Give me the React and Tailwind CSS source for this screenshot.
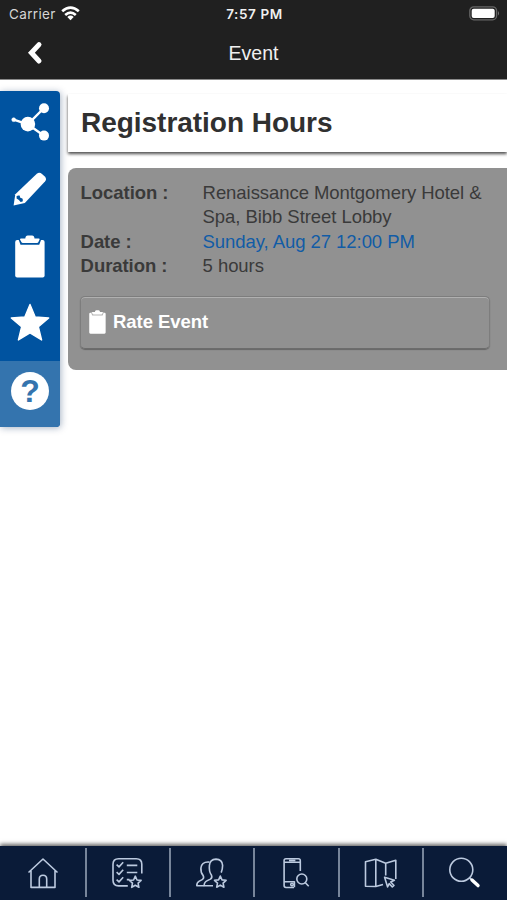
const ShareIcon = () => (
    <svg viewBox="0 91 60 67" className="w-[60px] h-[67px]" fill="#fff" stroke="#fff">
        <path d="M13.7 119.7 27.8 124.3 44 108M27.8 124.3 44 135.7" fill="none" strokeWidth="2.4" />
        <circle cx="13.7" cy="119.7" r="1.9" strokeWidth="0.6" />
        <circle cx="27.9" cy="124.1" r="7.3" stroke="none" />
        <circle cx="44" cy="108.2" r="5" stroke="none" />
        <circle cx="44" cy="135.6" r="5" stroke="none" />
    </svg>
)

const PencilIcon = () => (
    <svg viewBox="0 158 60 67" className="w-[60px] h-[67px]">
        <path d="M15.3 194.2 36.8 173.8Q39.3 171.6 42 173.9L44.8 176.4Q47.2 178.9 45 181.4L24.8 203 13.6 205.6Z" fill="#fff" />
        <path d="M16.6 196Q18.2 195 19.6 195.6L20.3 197.7 22.4 198.6Q23.3 200.2 22.6 201.4L20.6 202Q19.2 199.8 16.6 198.6Z" fill="#0053a0" />
    </svg>
)

const ClipboardIcon = ({ className, line }) => (
    <svg viewBox="0 0 30 43" className={className}>
        <rect x="0.2" y="5" width="29.4" height="37.5" rx="2" fill="#fff" />
        <path d="M3.2 3.5 5.5 9.8H24.2L26.6 3.5Z" fill={line} />
        <path d="M5 4.6Q5 3.6 6 3.6H10.3Q10.5 0.4 12.8 0.4H17Q19.3 0.4 19.5 3.6H23.8Q24.8 3.6 24.6 4.6L23.3 7.2Q23 7.9 22 7.9H7.8Q6.9 7.9 6.5 7.2Z" fill="#fff" />
    </svg>
)

const StarIcon = () => (
    <svg viewBox="0 292 60 69" className="w-[60px] h-[69px]">
        <path
            d="M30 304.4 35.2 317 48.7 318 38.4 326.8 41.6 340 30 332.9 18.4 340 21.6 326.8 11.3 318 24.8 317Z"
            fill="#fff"
            stroke="#fff"
            strokeWidth="1.4"
            strokeLinejoin="round"
        />
    </svg>
)

const WifiIcon = () => (
    <svg viewBox="0 0 19 15" className="w-[19px] h-[15px] -mt-px" fill="none" stroke="#fff" strokeWidth="2.7">
        <path d="M1.2 5.2Q9.5 -2 17.8 5.2" />
        <path d="M4.2 8.9Q9.5 4.3 14.8 8.9" />
        <path d="M6.3 10.9Q9.5 8.3 12.7 10.9L9.5 14.2Z" fill="#fff" stroke="none" />
    </svg>
)

const smallStar = 'M0 -5.8 1.7 -2 5.8 -1.6 2.8 1.2 3.6 5.3 0 3.2 -3.6 5.3 -2.8 1.2 -5.8 -1.6 -1.7 -2Z'

// 하단 메뉴 아이콘
const tabs = [
    {
        name: 'home',
        box: '0 846 85 54',
        width: 'w-[87px]',
        art: <path d="M28.5 872.5 43 859 57.5 872.5M31 870.8V887.4H55V870.8M39.3 887.2V879Q39.3 875.2 43 875.2T46.7 879V887.2" />,
    },
    {
        name: 'agenda',
        box: '87 846 82 54',
        width: 'w-[84px]',
        art: (
            <>
                <path d="M127.8 885.9H118.6Q113 885.9 113 880.3V864.3Q113 858.8 118.6 858.8H136.3Q141.8 858.8 141.8 864.3V873.5" />
                <path d="M116.6 864.7 119 866.9 123.2 862.3M116.6 872.2 119 874.4 123.2 869.8M116.6 879.7 119 881.9 123.2 877.3M126.8 865.4H137.3M126.8 872.5H137.3M126.8 879.6H129.5" />
                <path d={smallStar} transform="translate(135.3 882)" />
            </>
        ),
    },
    {
        name: 'attendees',
        box: '171 846 82 54',
        width: 'w-[84px]',
        art: (
            <>
                <path d="M213 885.7H204.2Q203.9 882.3 207.3 880.6L210.4 879.1Q212.6 877.8 211.4 875 208.8 871.8 209.4 865.4 209.8 859.3 216 859.1 222.3 859.3 222.6 865.4 222.6 869 221.2 872.6" />
                <path d="M209.4 862.1Q201.8 861.4 200.9 868 200.6 872.8 203.2 875.6 204.4 878.4 202.2 879.6L199.3 881.1Q196.6 882.6 196.8 885.7H204.2" />
                <path d={smallStar} transform="translate(220.3 881.9)" />
            </>
        ),
    },
    {
        name: 'app search',
        box: '255 846 83 54',
        width: 'w-[85px]',
        art: (
            <>
                <path d="M294 887.5H286Q284.1 887.5 284.1 885.6V860.6Q284.1 858.7 286 858.7H298.4Q300.3 858.7 300.3 860.6V871M284.1 862.2H300.3M284.1 881.7H294.4V887.3M289 860.5H295.4" />
                <circle cx="292" cy="884.6" r="1.3" />
                <circle cx="301.8" cy="879" r="5" />
                <path d="M305.4 882.7 308.7 886.2" />
            </>
        ),
    },
    {
        name: 'map',
        box: '340 846 82 54',
        width: 'w-[84px]',
        art: (
            <>
                <path d="M383 884.5 375.8 886.5 365.5 886.2V861.8L375.8 859.3 385.7 863.3 395.8 860.2V879M375.8 859.3V886.5M385.7 863.3V875.5" />
                <path d="M384.6 877.2 394.4 880.2 390.7 882 394 885.5 392.3 887 389.2 883.6 387.6 887Z" />
            </>
        ),
    },
    {
        name: 'search',
        box: '424 846 83 54',
        width: 'w-[83px]',
        art: (
            <>
                <circle cx="461.3" cy="869.8" r="11.5" />
                <path d="M469.5 877.8 472 880.2" />
                <path d="M472 880 478 885.6" stroke="#fff" strokeWidth="3.4" strokeLinecap="round" />
            </>
        ),
    },
]

const App = () => {
    return (
        <div className="w-[507px] h-[900px] bg-white flex flex-col overflow-hidden font-['Liberation_Sans',Arial,sans-serif]">
            <header className="h-[79.5px] shrink-0 bg-[#202020] text-[#f0f0f0] border-b border-[#8a8a8a]">
                <div className="h-7 grid grid-cols-3 items-center pl-[9px] pr-[7px] font-['Inter','Liberation_Sans',sans-serif]">
                    <div className="flex items-center gap-[5px] text-[13.5px] tracking-[0.35px] text-[#d5d5d5]">
                        <span>Carrier</span>
                        <WifiIcon />
                    </div>
                    <span className="text-center text-[13.5px] font-semibold tracking-[0.6px]">7:57 PM</span>
                    <svg viewBox="0 0 31 15" className="w-[31px] h-[15px] justify-self-end -mt-px">
                        <rect x="0.8" y="0.8" width="26.8" height="13" rx="4" fill="none" stroke="#666" strokeWidth="1.3" />
                        <rect x="2.7" y="2.7" width="23" height="9.2" rx="2" fill="#fff" />
                        <path d="M29 5Q31 7.3 29 9.6Z" fill="#777" />
                    </svg>
                </div>
                <div className="h-[50px] grid grid-cols-3 items-center">
                    <svg viewBox="0 0 16 24" className="w-4 h-6 ml-[27px] -mt-px">
                        <path d="M12 3.6 4.4 11.8 12 20" fill="none" stroke="#fff" strokeWidth="5" strokeLinecap="round" strokeLinejoin="miter" />
                    </svg>
                    <h1 className="text-center text-[19.5px] pt-0.5">Event</h1>
                </div>
            </header>

            <main className="flex-1 flex items-start">
                <nav className="mt-[11.5px] w-[60px] shrink-0 bg-[#0053a0] rounded-r-[4px] overflow-hidden shadow-[1px_1px_7px_rgba(0,40,90,0.35)]">
                    <ShareIcon />
                    <PencilIcon />
                    <div className="h-[67px] flex justify-center pt-2.5">
                        <ClipboardIcon className="w-[30px] h-[43px]" line="#0053a0" />
                    </div>
                    <StarIcon />
                    <div className="h-[66px] bg-[#3474ae] pl-[11px] pt-[11px]">
                        <div className="size-[38px] rounded-full bg-white text-[#3474ae] text-[32px] leading-[38px] font-bold text-center">?</div>
                    </div>
                </nav>

                <section className="flex-1 ml-2">
                    <h2 className="mt-[14px] h-[58px] pl-[13px] text-[28px] leading-[57px] font-bold text-[#303030] tracking-[-0.03px] shadow-[0_2px_3px_rgba(0,0,0,0.7)] [clip-path:inset(0_0_-6px_-4px)]">
                        Registration Hours
                    </h2>

                    <div className="mt-4 h-[202px] pt-[13px] pl-3 pr-[17px] bg-[#919191] rounded-l-lg text-[18.5px] leading-[24.5px] tracking-[-0.06px] text-[#3a3a3a]">
                        <dl className="grid grid-cols-[122px_1fr] pl-[0.6px]">
                            <dt className="font-bold">Location :</dt>
                            <dd>
                                <div className="whitespace-nowrap">Renaissance Montgomery Hotel &amp;</div>
                                <div>Spa, Bibb Street Lobby</div>
                            </dd>
                            <dt className="font-bold">Date :</dt>
                            <dd className="text-[#115ca6]">Sunday, Aug 27 12:00 PM</dd>
                            <dt className="font-bold">Duration :</dt>
                            <dd>5 hours</dd>
                        </dl>
                        <button className="mt-[17px] w-full h-[53px] flex items-center gap-[7px] pl-[8px] rounded-[5px] text-white font-bold border border-[#7d7d7d] border-b-[#6c6c6c] shadow-[inset_0_1px_0_#b0b0b0,0_1px_1px_#666]">
                            <ClipboardIcon className="w-[17px] h-6" line="#b4b4b4" />
                            <span className="pt-px">Rate Event</span>
                        </button>
                    </div>
                </section>
            </main>

            <footer className="h-[54px] shrink-0 bg-[#0a1b38] flex items-start shadow-[0_-2px_4px_rgba(0,0,0,0.6)] divide-x-2 divide-[#77859a] pt-[2px]">
                {tabs.map((tab) => (
                    <button key={tab.name} aria-label={tab.name} className={`${tab.width} shrink-0 h-[49px]`}>
                        <svg viewBox={tab.box} className="w-full h-[54px] -mt-[2px] overflow-visible" fill="none" stroke="#bccadf" strokeWidth="1.6" strokeLinejoin="round">
                            {tab.art}
                        </svg>
                    </button>
                ))}
            </footer>
        </div>
    )
}

export default App
